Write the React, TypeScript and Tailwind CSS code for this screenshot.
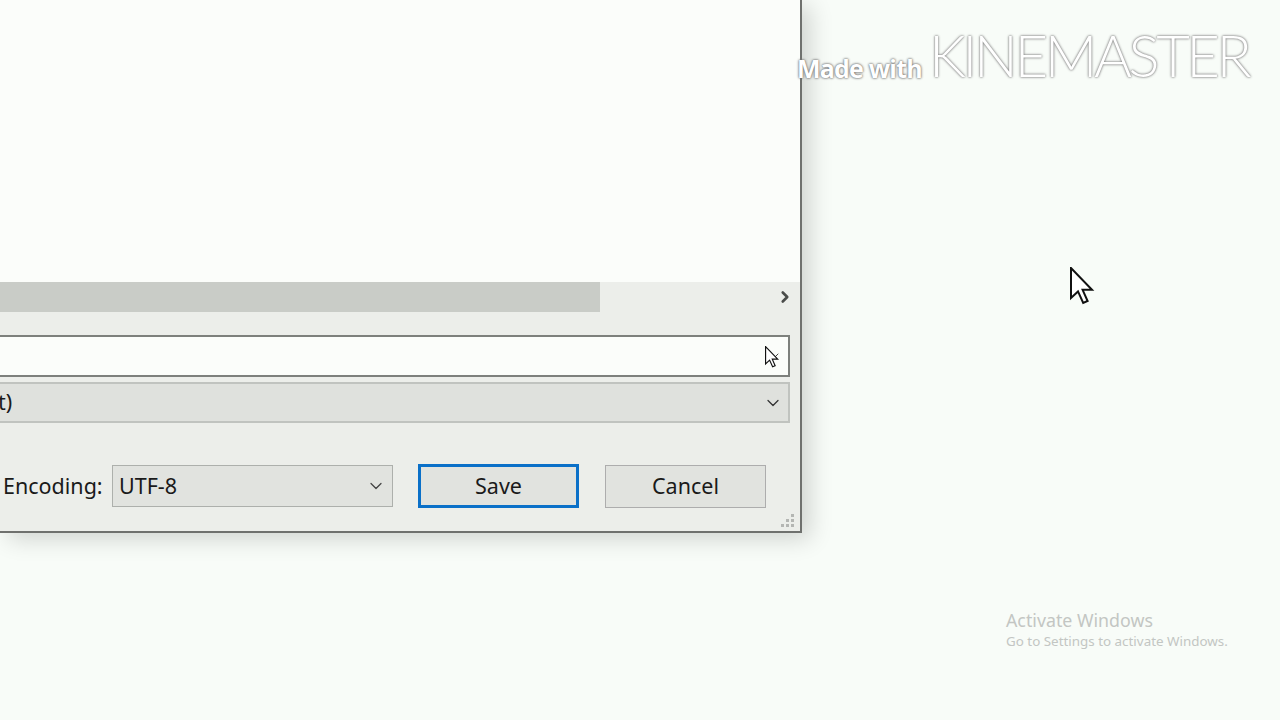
import { ChevronDown, ChevronRight } from 'lucide-react'

function Pointer({ className }: { className?: string }) {
  return (
    <svg className={className} width="26" height="38" viewBox="0 0 13 19">
      <path
        d="M0.5 0.5 L0.5 15.5 L4 12.2 L6.6 18 L8.8 17 L6.3 11.4 L11 11.4 Z"
        fill="#ffffff"
        stroke="#111111"
        strokeWidth="1"
        strokeLinejoin="miter"
      />
    </svg>
  )
}

function Grip() {
  const dots = [
    [10, 0],
    [5, 5],
    [10, 5],
    [0, 10],
    [5, 10],
    [10, 10],
  ]
  return (
    <svg width="14" height="14" viewBox="0 0 14 14">
      {dots.map(([x, y]) => (
        <rect key={`${x}-${y}`} x={x} y={y} width="3" height="3" fill="#b4b6b3" />
      ))}
    </svg>
  )
}

export default function App() {
  return (
    <div
      className="relative h-[720px] w-[1280px] overflow-hidden bg-[#f8fcf8]"
      style={{ fontFamily: '"Noto Sans", "Open Sans", sans-serif' }}
    >
      {/* save dialog, left part off-screen */}
      <div className="absolute left-0 top-0 w-[802px] h-[533px] bg-[#eceeea] border-r-2 border-b-2 border-[#6f716e] shadow-[8px_6px_22px_rgba(0,0,0,0.16)] flex flex-col">
        <div className="h-[282px] bg-[#fbfdfa]" />

        <div className="h-[30px] flex items-stretch">
          <div className="w-[600px] bg-[#c9ccc7]" />
          <div className="flex-1 flex items-center justify-end pr-[6px]">
            <ChevronRight className="h-[18px] w-[18px] text-[#4a4c4a]" strokeWidth={3.5} />
          </div>
        </div>

        <div className="mt-[23px] mr-[10px] h-[42px] bg-[#fbfdfa] border-2 border-l-0 border-[#7d807c] flex items-center justify-end pr-[6px]">
          <div className="relative">
            <ChevronDown className="h-4 w-4 text-[#444]" strokeWidth={1.5} />
            <Pointer className="absolute -left-[1px] -top-[2px] h-[22px] w-[15px]" />
          </div>
        </div>

        <div className="mt-[5px] mr-[10px] h-[41px] bg-[#dfe1dd] border-2 border-l-0 border-[#c0c3bf] flex items-center justify-between pr-[5px] text-[21.5px] text-[#1a1a1a]">
          <span className="-ml-[2px] whitespace-nowrap">t)</span>
          <ChevronDown className="h-5 w-5 text-[#333]" strokeWidth={1.5} />
        </div>

        <div className="mt-[41px] flex items-center h-[44px] text-[21.5px] text-[#1a1a1a]">
          <span className="ml-[3px] w-[98px] whitespace-nowrap">Encoding:</span>
          <div className="ml-[11px] w-[281px] h-[42px] bg-[#e1e3df] border border-[#adb0ac] flex items-center justify-between pl-[6px] pr-[6px]">
            <span>UTF-8</span>
            <ChevronDown className="h-5 w-5 text-[#444]" strokeWidth={1.5} />
          </div>
          <button className="ml-[25px] w-[161px] h-[44px] bg-[#e1e3df] border-[3px] border-[#0a70c8]">
            Save
          </button>
          <button className="ml-[26px] w-[161px] h-[43px] bg-[#e1e3df] border border-[#adadad]">
            Cancel
          </button>
        </div>

        <div className="mt-auto mb-[3px] mr-[5px] flex justify-end">
          <Grip />
        </div>
      </div>

      {/* watermark */}
      <div className="absolute left-[797px] top-[26px] flex items-end gap-[7px] text-white whitespace-nowrap">
        <span
          className="text-[25px] font-bold leading-none mb-[3px] tracking-[-0.8px]"
          style={{ fontFamily: '"Open Sans", "Noto Sans", sans-serif', textShadow: '0 0 2px #666, 0 0 3px #888' }}
        >
          Made with
        </span>
        <span
          className="text-[58px] font-light leading-none tracking-[-3.4px]"
          style={{ fontFamily: 'Lato, "Open Sans", sans-serif', textShadow: '0 0 2px #777, 0 0 3px #999' }}
        >
          KINEMASTER
        </span>
      </div>

      {/* mouse pointer */}
      <Pointer className="absolute left-[1070px] top-[267px]" />

      {/* activation notice */}
      <div className="absolute left-[1006px] top-[609px] text-[#c3c6c3] whitespace-nowrap">
        <div className="text-[17.8px] leading-[22px]">Activate Windows</div>
        <div className="text-[13.4px] leading-[18px] mt-[1px]">Go to Settings to activate Windows.</div>
      </div>
    </div>
  )
}
